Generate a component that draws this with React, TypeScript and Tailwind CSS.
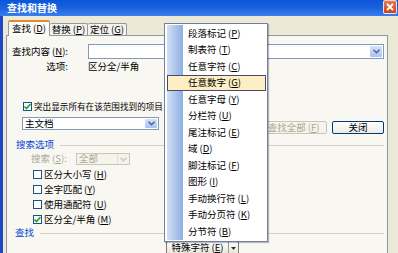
import React from "react";

const MENU = [
    ["段落标记", "P"],
    ["制表符", "T"],
    ["任意字符", "C"],
    ["任意数字", "G"],
    ["任意字母", "Y"],
    ["分栏符", "U"],
    ["尾注标记", "E"],
    ["域", "D"],
    ["脚注标记", "F"],
    ["图形", "I"],
    ["手动换行符", "L"],
    ["手动分页符", "K"],
    ["分节符", "B"],
];

function Key({ k }: { k: string }) {
    return (
        <span className="ml-[2px]">
            (<span className="underline">{k}</span>)
        </span>
    );
}

function Check({ on, label, k }: { on?: boolean; label: string; k: string }) {
    return (
        <div className="h-[15px] ml-[25px] flex items-center gap-[2px]">
            <div className="w-[9px] h-[9px] border border-[#1c5180] bg-white flex items-center justify-center">
                {on && (
                    <svg width="7" height="7" viewBox="0 0 7 7">
                        <path d="M0.5 3.5 L2.5 5.5 L6.5 1" stroke="#21a121" strokeWidth="1.6" fill="none" />
                    </svg>
                )}
            </div>
            <span>
                {label}
                <Key k={k} />
            </span>
        </div>
    );
}

function Arrow({ disabled }: { disabled?: boolean }) {
    return (
        <div
            className={
                disabled
                    ? "w-[12px] h-full border-l border-[#e3e1d6] bg-[#f3f2ec] flex items-center justify-center"
                    : "w-[12px] h-full rounded-[1px] bg-linear-to-b from-[#d6e2fc] to-[#a9c1f5] flex items-center justify-center"
            }
        >
            <svg width="7" height="5" viewBox="0 0 7 5">
                <path d="M0.5 0.8 L3.5 3.8 L6.5 0.8" stroke={disabled ? "#c9c7ba" : "#4d6185"} strokeWidth="1.4" fill="none" />
            </svg>
        </div>
    );
}

export default function App() {
    return (
        <div className="w-[398px] h-[253px] overflow-hidden relative bg-[#ece9d8] text-black text-[9.5px] leading-none font-['Noto_Sans_CJK_SC','Noto_Sans',sans-serif]">
            {/* title bar */}
            <div className="h-[16px] flex items-center justify-between pl-[7px] bg-linear-to-b from-[#0a55dc] via-[#1a62dc] to-[#3a7ff0]">
                <span className="text-white font-bold text-[10px]">查找和替换</span>
                <div className="w-[14px] h-[14px] mr-[1px] self-start border border-white/80 rounded-[2px] bg-linear-to-b from-[#e8784f] to-[#c9441f] flex items-center justify-center">
                    <svg width="8" height="8" viewBox="0 0 8 8">
                        <path d="M1 1 L7 7 M7 1 L1 7" stroke="white" strokeWidth="1.8" />
                    </svg>
                </div>
            </div>

            <div className="flex h-[237px]">
                <div className="w-[3px] bg-[#1d49c8]" />
                <div className="flex-1 pl-[3px] pr-[10px] pt-[4px] flex flex-col">
                    {/* tabs */}
                    <div className="h-[15px] flex items-end pl-[2px] relative z-10">
                        <div className="w-[42px] h-[16px] -mb-px bg-[#fbfbf8] border border-[#919b9c] border-b-0 border-t-2 border-t-[#e68b2c] rounded-t-[2px] flex items-center justify-center">
                            查找<Key k="D" />
                        </div>
                        <div className="w-[38px] h-[12px] bg-[#f4f3ee] border border-[#919b9c] border-b-0 border-l-0 rounded-t-[2px] flex items-center justify-center">
                            替换<Key k="P" />
                        </div>
                        <div className="w-[39px] h-[12px] bg-[#f4f3ee] border border-[#919b9c] border-b-0 border-l-0 rounded-t-[2px] flex items-center justify-center">
                            定位<Key k="G" />
                        </div>
                    </div>

                    {/* panel */}
                    <div className="flex-1 border border-[#919b9c] bg-[#f8f7f2] pl-px pr-[3px] flex flex-col">
                        <div className="mt-[8px] h-[15px] flex items-center">
                            <span className="w-[60px] text-right">
                                查找内容<Key k="N" />:
                            </span>
                            <div className="ml-[20px] flex-1 h-full border border-[#7f9db9] bg-white flex justify-end p-px">
                                <Arrow />
                            </div>
                        </div>
                        <div className="mt-[3px] h-[10px] flex items-center">
                            <span className="w-[60px] text-right">选项:</span>
                            <span className="ml-[20px]">区分全/半角</span>
                        </div>

                        <div className="mt-[30px] h-[9px] flex items-center ml-[15px] gap-[2px]">
                            <div className="w-[9px] h-[9px] border border-[#1c5180] bg-white flex items-center justify-center">
                                <svg width="7" height="7" viewBox="0 0 7 7">
                                    <path d="M0.5 3.5 L2.5 5.5 L6.5 1" stroke="#21a121" strokeWidth="1.6" fill="none" />
                                </svg>
                            </div>
                            <span className="whitespace-nowrap text-[8.6px]">突出显示所有在该范围找到的项目</span>
                        </div>

                        <div className="mt-[6px] h-[17px] flex">
                            <div className="ml-[14px] w-[137px] h-[13px] border border-[#7f9db9] bg-white flex items-center justify-between pl-[2px] p-px">
                                <span>主文档</span>
                                <Arrow />
                            </div>
                            <div className="flex-1" />
                            <div className="self-end w-[67px] h-[13px] border border-[#c9c7ba] rounded-[2px] bg-[#f5f4ea] text-[#aca899] flex items-center justify-center">
                                查找全部<Key k="F" />
                            </div>
                            <div className="self-end ml-[5px] w-[52px] h-[13px] border border-[#003c74] rounded-[2px] bg-linear-to-b from-white to-[#ecebe6] flex items-center justify-center">
                                关闭
                            </div>
                        </div>

                        <div className="mt-[6px] h-[10px] flex items-center ml-[8px]">
                            <span className="text-[#0046d5]">搜索选项</span>
                            <div className="flex-1 ml-[6px] border-t border-[#d0d0bf]" />
                        </div>

                        <div className="mt-[3px] h-[12px] flex items-center ml-[23px]">
                            <span className="w-[38px] text-[#aca899]">
                                搜索<Key k="S" />:
                            </span>
                            <div className="ml-[7px] w-[54px] h-full border border-[#c9c7ba] bg-[#f5f4ea] text-[#aca899] flex items-center justify-between pl-[2px]">
                                <span>全部</span>
                                <Arrow disabled />
                            </div>
                        </div>

                        <div className="mt-[2px] flex flex-col">
                            <Check label="区分大小写" k="H" />
                            <Check label="全字匹配" k="Y" />
                            <Check label="使用通配符" k="U" />
                            <Check on label="区分全/半角" k="M" />
                        </div>

                        <div className="mt-px h-[10px] flex items-center ml-[7px]">
                            <span className="text-[#0046d5]">查找</span>
                            <div className="flex-1 ml-[6px] border-t border-[#d0d0bf]" />
                        </div>

                        <div className="mt-[3px] ml-[158px] w-[73px] h-[14px] flex border border-[#7a7a7a] rounded-[2px] bg-linear-to-b from-white to-[#e6e4da]">
                            <span className="flex-1 flex items-center justify-center">
                                特殊字符<Key k="E" />
                            </span>
                            <span className="w-[10px] border-l border-[#9a9a9a] flex items-center justify-center">
                                <svg width="5" height="3" viewBox="0 0 5 3">
                                    <path d="M0 0 H5 L2.5 3 Z" fill="#333" />
                                </svg>
                            </span>
                        </div>
                    </div>
                </div>
            </div>

            {/* special character menu */}
            <div className="absolute left-[164px] top-[23px] w-[104px] border border-[#6f7f9c] bg-white pl-[2px] pr-px py-px shadow-[1px_1px_1px_rgba(0,0,0,0.25)]">
                {MENU.map(([label, k], i) =>
                    i === 3 ? (
                        <div key={label} className="h-[16.5px] flex items-center border border-[#4a4a6a] bg-[#fdeec3]">
                            <span className="pl-[20px]">
                                {label}
                                <Key k={k} />
                            </span>
                        </div>
                    ) : (
                        <div key={label} className="h-[16.5px] flex items-center">
                            <div className="w-[16px] h-full bg-linear-to-r from-[#d2e0f6] to-[#8eaee0]" />
                            <span className="pl-[5px]">
                                {label}
                                <Key k={k} />
                            </span>
                        </div>
                    )
                )}
            </div>
        </div>
    );
}
